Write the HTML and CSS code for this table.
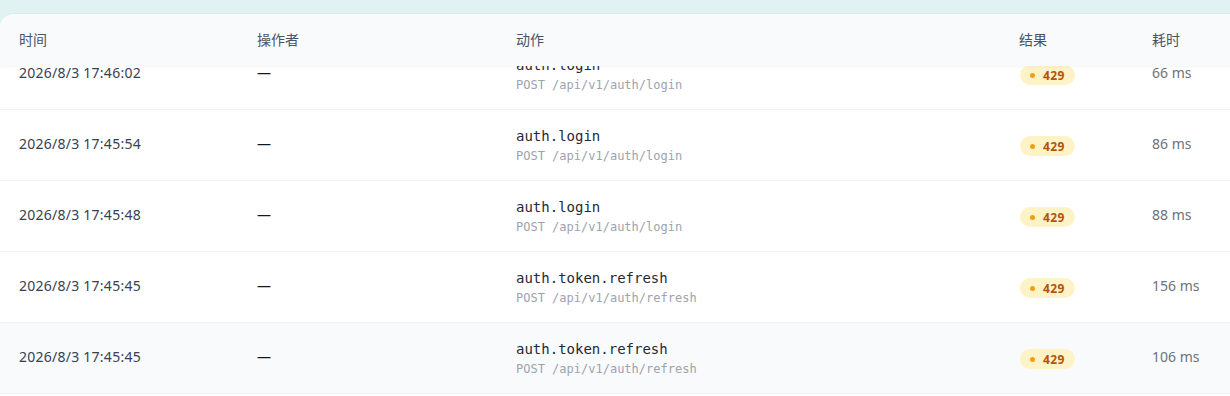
FILE: index.html
```html
<!DOCTYPE html>
<html lang="zh-CN">
<head>
    <meta charset="UTF-8">
    <meta name="viewport" content="width=device-width, initial-scale=1.0">
    <title>审计日志</title>
    <link rel="stylesheet" href="styles.css">
</head>
<body>
    <div class="card">
        <div class="log-head">
            <div class="cell">时间</div>
            <div class="cell">操作者</div>
            <div class="cell">动作</div>
            <div class="cell">结果</div>
            <div class="cell">耗时</div>
        </div>

        <div class="log-body">
            <div class="log-row">
                <div class="cell date">2026/8/3 17:46:02</div>
                <div class="cell actor">—</div>
                <div class="cell action">
                    <div class="action-name">auth.login</div>
                    <div class="action-path">POST /api/v1/auth/login</div>
                </div>
                <div class="cell"><span class="badge"><i class="dot"></i>429</span></div>
                <div class="cell duration">66 ms</div>
            </div>
            <div class="log-row">
                <div class="cell date">2026/8/3 17:45:54</div>
                <div class="cell actor">—</div>
                <div class="cell action">
                    <div class="action-name">auth.login</div>
                    <div class="action-path">POST /api/v1/auth/login</div>
                </div>
                <div class="cell"><span class="badge"><i class="dot"></i>429</span></div>
                <div class="cell duration">86 ms</div>
            </div>
            <div class="log-row">
                <div class="cell date">2026/8/3 17:45:48</div>
                <div class="cell actor">—</div>
                <div class="cell action">
                    <div class="action-name">auth.login</div>
                    <div class="action-path">POST /api/v1/auth/login</div>
                </div>
                <div class="cell"><span class="badge"><i class="dot"></i>429</span></div>
                <div class="cell duration">88 ms</div>
            </div>
            <div class="log-row">
                <div class="cell date">2026/8/3 17:45:45</div>
                <div class="cell actor">—</div>
                <div class="cell action">
                    <div class="action-name">auth.token.refresh</div>
                    <div class="action-path">POST /api/v1/auth/refresh</div>
                </div>
                <div class="cell"><span class="badge"><i class="dot"></i>429</span></div>
                <div class="cell duration">156 ms</div>
            </div>
            <div class="log-row hover">
                <div class="cell date">2026/8/3 17:45:45</div>
                <div class="cell actor">—</div>
                <div class="cell action">
                    <div class="action-name">auth.token.refresh</div>
                    <div class="action-path">POST /api/v1/auth/refresh</div>
                </div>
                <div class="cell"><span class="badge"><i class="dot"></i>429</span></div>
                <div class="cell duration">106 ms</div>
            </div>
        </div>
    </div>
</body>
</html>
```

FILE: styles.css
```css
* {
    margin: 0;
    padding: 0;
    box-sizing: border-box;
}

body {
    height: 396px;
    overflow: hidden;
    background: linear-gradient(180deg, #e0f2f1 0%, #e6f3f3 100%);
    font-family: 'Noto Sans', 'Noto Sans CJK SC', sans-serif;
    font-size: 14px;
}

.card {
    width: 1270px;
    height: 400px;
    margin-top: 13px;
    background-color: #fff;
    border-top: 1px solid #dbe9ea;
    border-radius: 14px 14px 0 0;
    overflow: hidden;
}

.log-head,
.log-row {
    display: grid;
    grid-template-columns: 238px 259px 503px 133px 1fr;
    align-items: center;
}

.log-head {
    position: relative;
    z-index: 1;
    height: 52px;
    background-color: #f8fafc;
    color: #475569;
    box-shadow: 0 1px 2px rgba(15, 23, 42, 0.04);
}

.cell {
    padding-left: 19px;
}

.log-head .cell,
.date,
.actor,
.duration {
    padding-bottom: 3px;
}

.log-body {
    margin-top: -27px;
}

.log-row {
    height: 71px;
    border-bottom: 1px solid #f0f2f5;
}

.log-row.hover {
    background-color: #f8fafc;
}

.date {
    color: #374151;
    letter-spacing: 0.25px;
}

.actor {
    color: #111827;
}

.action-name {
    font-family: 'DejaVu Sans Mono', monospace;
    font-size: 14px;
    line-height: 18px;
    color: #1f2937;
}

.action-path {
    margin-top: 3px;
    font-family: 'DejaVu Sans Mono', monospace;
    font-size: 12px;
    line-height: 16px;
    color: #9ca3af;
}

.badge {
    display: inline-flex;
    align-items: center;
    gap: 8px;
    height: 20px;
    margin-left: 1px;
    padding: 0 10px;
    border-radius: 10px;
    background-color: #fef3c7;
    color: #b45309;
    font-size: 12px;
    font-weight: 700;
    letter-spacing: 0.4px;
}

.dot {
    width: 5px;
    height: 5px;
    border-radius: 50%;
    background-color: #f59e0b;
}

.duration {
    color: #6b7280;
}
```
